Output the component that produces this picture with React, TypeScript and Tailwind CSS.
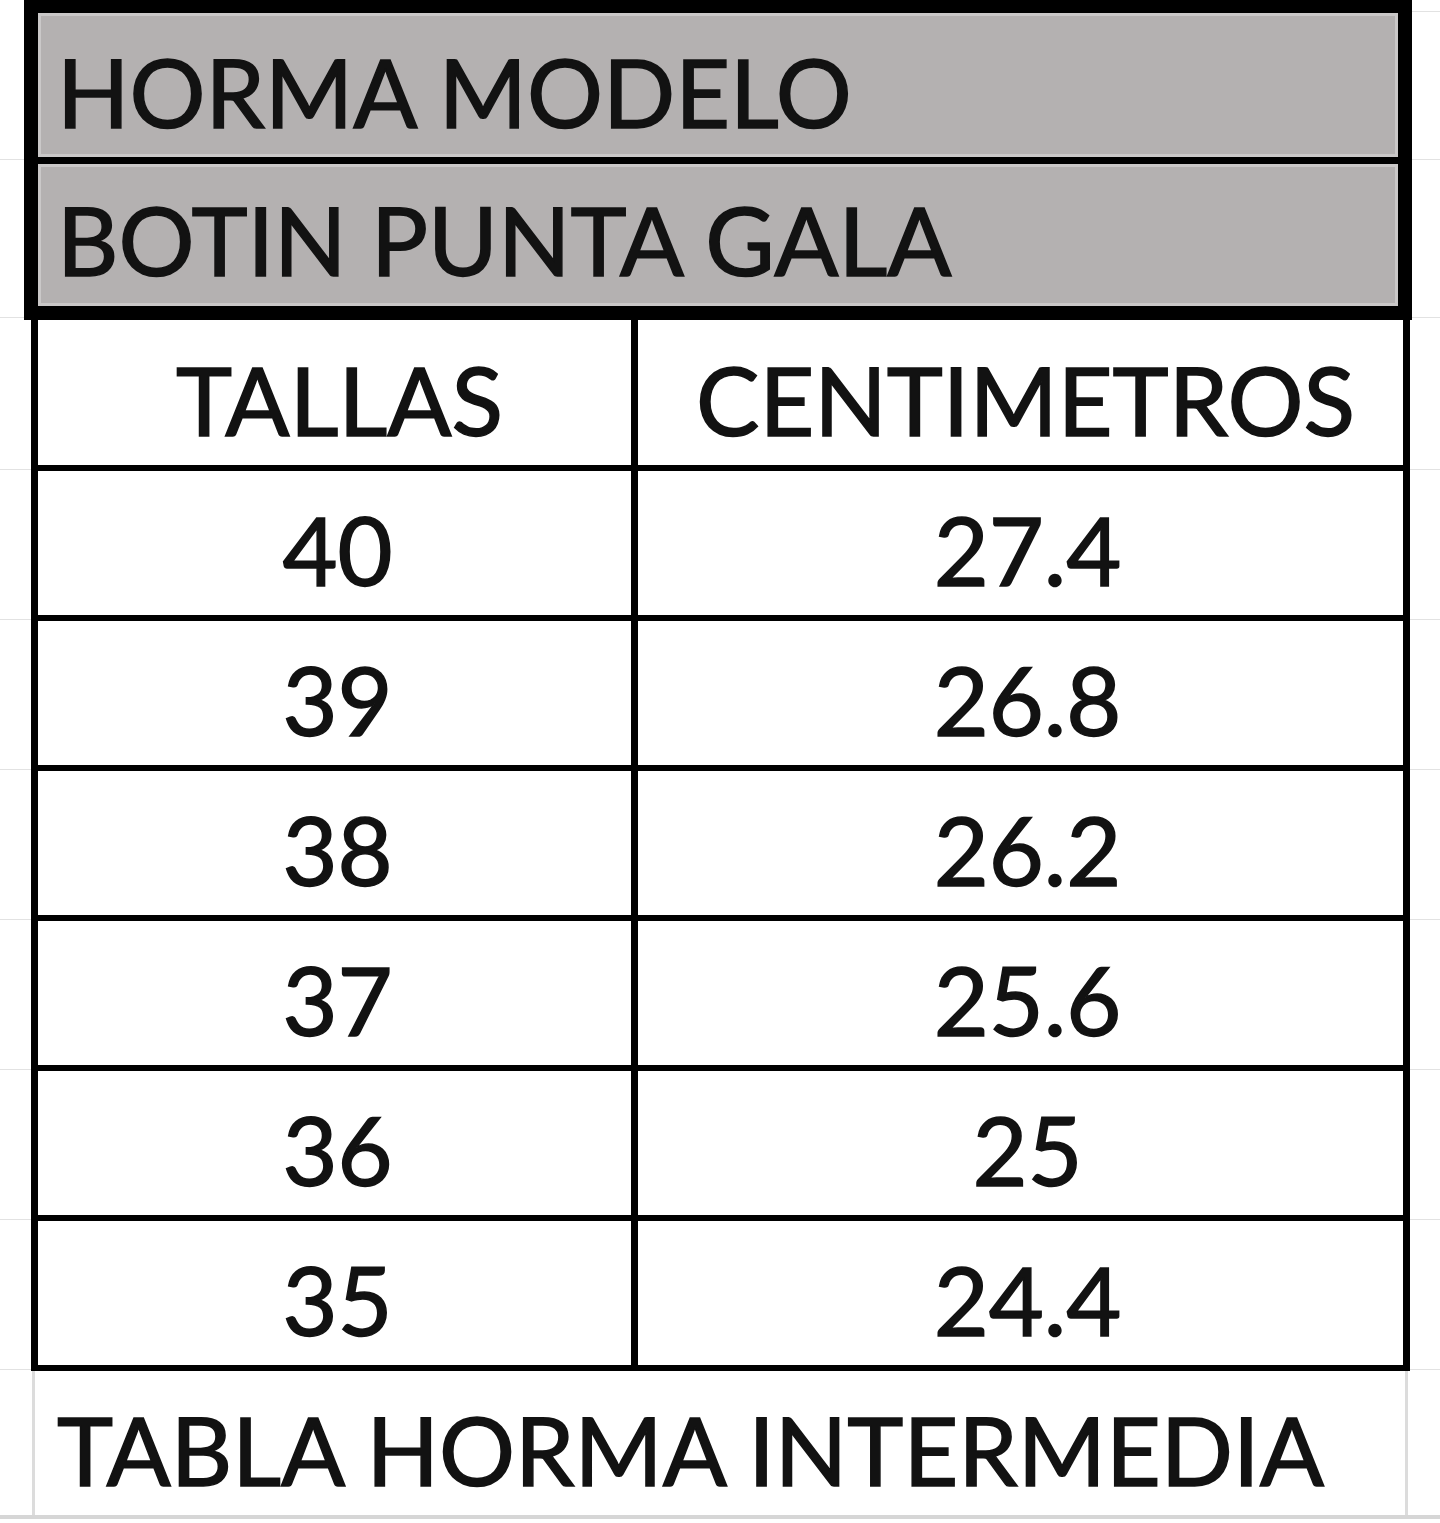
const tallas = [
  { talla: '40', cm: '27.4' },
  { talla: '39', cm: '26.8' },
  { talla: '38', cm: '26.2' },
  { talla: '37', cm: '25.6' },
  { talla: '36', cm: '25' },
  { talla: '35', cm: '24.4' },
]

const font = "font-['Lato','Open_Sans','Liberation_Sans',sans-serif]"
const txt = 'text-[95px] leading-none [-webkit-text-stroke:1.5px_#121212]'

function Gutter({ lines, className = '' }: { lines: number[]; className?: string }) {
  // faint excel gridlines outside the bordered table
  return (
    <div className={`flex flex-col ${className}`}>
      {lines.map((h, i) => (
        <div key={i} style={{ height: h }} className="border-b border-[#e2e2e2]" />
      ))}
    </div>
  )
}

export default function App() {
  return (
    <div className={`w-[1440px] h-[1523px] bg-white overflow-hidden text-[#121212] ${font}`}>
      {/* Header: modelo */}
      <div className="flex">
        <Gutter lines={[160, 158]} className="w-[24px]" />
        <div className="w-[1388px] border-t-[13px] border-x-[14px] border-b-[14px] border-black bg-black flex flex-col">
          <div className="h-[144px] bg-[#b4b1b1] border-[3px] border-[#cac8c8] flex items-end pl-[16px] pb-[15px]">
            <span className={txt}>HORMA MODELO</span>
          </div>
          <div className="h-[7px] bg-black" />
          <div className="h-[142px] bg-[#b4b1b1] border-[3px] border-[#cac8c8] flex items-end pl-[16px] pb-[16px]">
            <span className={txt}>BOTIN PUNTA GALA</span>
          </div>
        </div>
        <Gutter lines={[12, 148, 158]} className="flex-1" />
      </div>

      {/* Tabla de tallas */}
      <div className="flex">
        <Gutter lines={[150, 150, 150, 150, 150, 150, 150]} className="w-[31px]" />
        <div className="w-[1379px] border-x-[7px] border-black">
          <div className="grid grid-cols-[600px_765px]">
            <div className="h-[151px] border-b-[6px] border-r-[7px] border-black flex items-end justify-center pb-[18px]">
              <span className={`${txt} pl-[10px]`}>TALLAS</span>
            </div>
            <div className="h-[151px] border-b-[6px] border-black flex items-end justify-center pb-[18px]">
              <span className={`${txt} pl-[10px]`}>CENTIMETROS</span>
            </div>
            {tallas.map((t) => (
              <div key={t.talla} className="contents">
                <div className="h-[150px] border-b-[6px] border-r-[7px] border-black flex items-end justify-center pb-[18px]">
                  <span className={`${txt} pl-[6px]`}>{t.talla}</span>
                </div>
                <div className="h-[150px] border-b-[6px] border-black flex items-end justify-center pb-[18px]">
                  <span className={`${txt} pl-[14px]`}>{t.cm}</span>
                </div>
              </div>
            ))}
          </div>
        </div>
        <Gutter lines={[150, 150, 150, 150, 150, 150, 150]} className="flex-1" />
      </div>

      {/* Pie */}
      <div className="flex border-b-[4px] border-[#d6d6d6]">
        <div className="w-[32px]" />
        <div className="w-[1376px] h-[144px] border-x-[3px] border-[#dcdcdc] flex items-end pl-[22px] pb-[18px]">
          <span className={txt}>TABLA HORMA INTERMEDIA</span>
        </div>
        <div className="flex-1" />
      </div>
    </div>
  )
}
